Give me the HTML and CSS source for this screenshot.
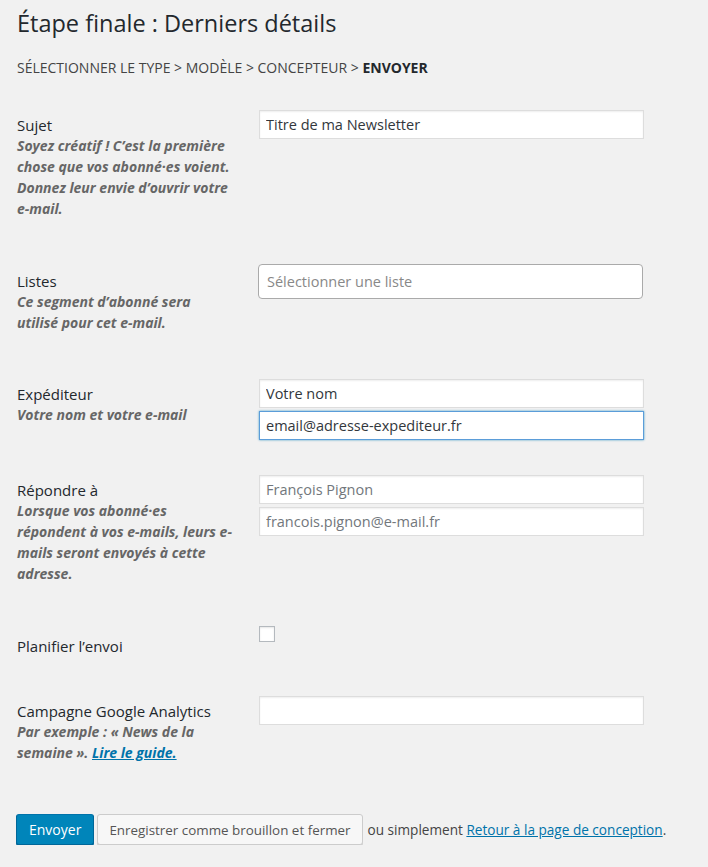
FILE: index.html
```html
<!DOCTYPE html>
<html>
<head>
    <meta charset="utf-8">
    <title>Étape finale</title>
    <link rel="stylesheet" href="styles.css">
</head>
<body>
    <div class="wrap">
        <h1>Étape finale : Derniers détails</h1>
        <p class="steps">Sélectionner le type &gt; Modèle &gt; Concepteur &gt; <b>Envoyer</b></p>

        <form class="send-form">
            <div class="field field-subject">
                <div class="field-label">
                    <label for="subject">Sujet</label>
                    <p class="desc">Soyez créatif ! C’est la première chose que vos abonné·es voient. Donnez leur envie d’ouvrir votre e-mail.</p>
                </div>
                <div class="field-input">
                    <input type="text" id="subject" class="text" value="Titre de ma Newsletter">
                </div>
            </div>

            <div class="field field-lists">
                <div class="field-label">
                    <label>Listes</label>
                    <p class="desc">Ce segment d’abonné sera utilisé pour cet e-mail.</p>
                </div>
                <div class="field-input">
                    <div class="select-box">Sélectionner une liste</div>
                </div>
            </div>

            <div class="field field-sender">
                <div class="field-label">
                    <label for="sender_name">Expéditeur</label>
                    <p class="desc">Votre nom et votre e-mail</p>
                </div>
                <div class="field-input">
                    <input type="text" id="sender_name" class="text" value="Votre nom">
                    <input type="text" class="text is-focused" value="email@adresse-expediteur.fr">
                </div>
            </div>

            <div class="field field-reply">
                <div class="field-label">
                    <label for="reply_name">Répondre à</label>
                    <p class="desc">Lorsque vos abonné·es<br>répondent à vos e-mails, leurs e-mails seront envoyés à cette adresse.</p>
                </div>
                <div class="field-input">
                    <input type="text" id="reply_name" class="text" placeholder="François Pignon">
                    <input type="text" class="text" placeholder="francois.pignon@e-mail.fr">
                </div>
            </div>

            <div class="field field-schedule">
                <div class="field-label field-label-check">
                    <label for="schedule">Planifier l’envoi</label>
                </div>
                <div class="field-input">
                    <input type="checkbox" id="schedule" class="check">
                </div>
            </div>

            <div class="field field-ga">
                <div class="field-label">
                    <label for="ga">Campagne Google Analytics</label>
                    <p class="desc">Par exemple : «&nbsp;News de la semaine&nbsp;». <a href="#">Lire le guide.</a></p>
                </div>
                <div class="field-input">
                    <input type="text" id="ga" class="text">
                </div>
            </div>

            <div class="actions">
                <button type="submit" class="button button-primary">Envoyer</button>
                <button type="button" class="button">Enregistrer comme brouillon et fermer</button>
                <span class="alt">ou simplement <a href="#">Retour à la page de conception</a>.</span>
            </div>
        </form>
    </div>
</body>
</html>
```

FILE: styles.css
```css
body {
    margin: 0;
    background-color: #f1f1f1;
    color: #23282d;
    font-family: "Open Sans", "Noto Sans", sans-serif;
    font-size: 14px;
}

.wrap {
    padding: 8px 20px 0 17px;
}

h1 {
    margin: 0;
    font-size: 23.5px;
    font-weight: 400;
    line-height: 30px;
    color: #23282d;
}

.steps {
    margin: 20px 0 0;
    line-height: 20px;
    text-transform: uppercase;
    color: #444;
}

.steps b {
    color: #23282d;
}

.send-form {
    margin-top: 32px;
}

.field {
    display: grid;
    grid-template-columns: 242px 385px;
    align-items: start;
    padding-bottom: 45px;
}

.field-lists { padding-bottom: 46px; }
.field-sender { padding-bottom: 32px; }
.field-reply { padding-bottom: 42px; }
.field-schedule { padding-bottom: 40px; }
.field-ga { padding-bottom: 51px; }

.field-label {
    padding: 5px 24px 0 0;
}

.field-lists .field-label {
    padding-top: 7px;
}

.field-label-check {
    padding-top: 10px;
}

.field-label label {
    display: block;
    font-size: 15px;
    line-height: 20px;
}

.desc {
    margin: 0;
    font-size: 14px;
    line-height: 21px;
    font-weight: 700;
    font-style: italic;
    color: #666;
}

.desc a {
    color: #0073aa;
}

.text {
    display: block;
    box-sizing: border-box;
    width: 385px;
    height: 29px;
    margin: 0 0 3px;
    padding: 3px 6px;
    border: 1px solid #ddd;
    background: #fff;
    box-shadow: inset 0 1px 2px rgba(0,0,0,0.07);
    font-family: inherit;
    font-size: 14.5px;
    color: #32373c;
    outline: none;
}

.text::placeholder {
    color: #72777c;
}

.text.is-focused {
    border-color: #5b9dd9;
    box-shadow: 0 0 2px rgba(30,140,190,0.8);
}

.select-box {
    box-sizing: border-box;
    width: 385px;
    height: 35px;
    margin-left: -1px;
    padding: 0 8px;
    border: 1px solid #aaa;
    border-radius: 4px;
    background: #fff;
    font-size: 14.5px;
    line-height: 33px;
    color: #888;
}

.check {
    appearance: none;
    display: block;
    width: 16px;
    height: 16px;
    margin: 0;
    border: 1px solid #b4b9be;
    background: #fff;
    box-shadow: inset 0 1px 2px rgba(0,0,0,0.1);
}

.actions {
    display: flex;
    align-items: center;
    gap: 3px;
    margin-left: -1px;
    white-space: nowrap;
}

.button {
    height: 31px;
    padding: 0 11px;
    border: 1px solid #ccc;
    border-radius: 3px;
    background: #f7f7f7;
    box-shadow: 0 1px 0 #ccc;
    font-family: inherit;
    font-size: 13.4px;
    color: #555;
    white-space: nowrap;
    cursor: pointer;
}

.button-primary {
    padding: 0 12px;
    font-size: 14px;
    background: #0085ba;
    border-color: #0073aa #006799 #006799;
    box-shadow: 0 1px 0 #006799;
    color: #fff;
}

.alt {
    margin-left: 2px;
    font-size: 13.6px;
    color: #444;
}

.alt a {
    color: #0073aa;
}
```
